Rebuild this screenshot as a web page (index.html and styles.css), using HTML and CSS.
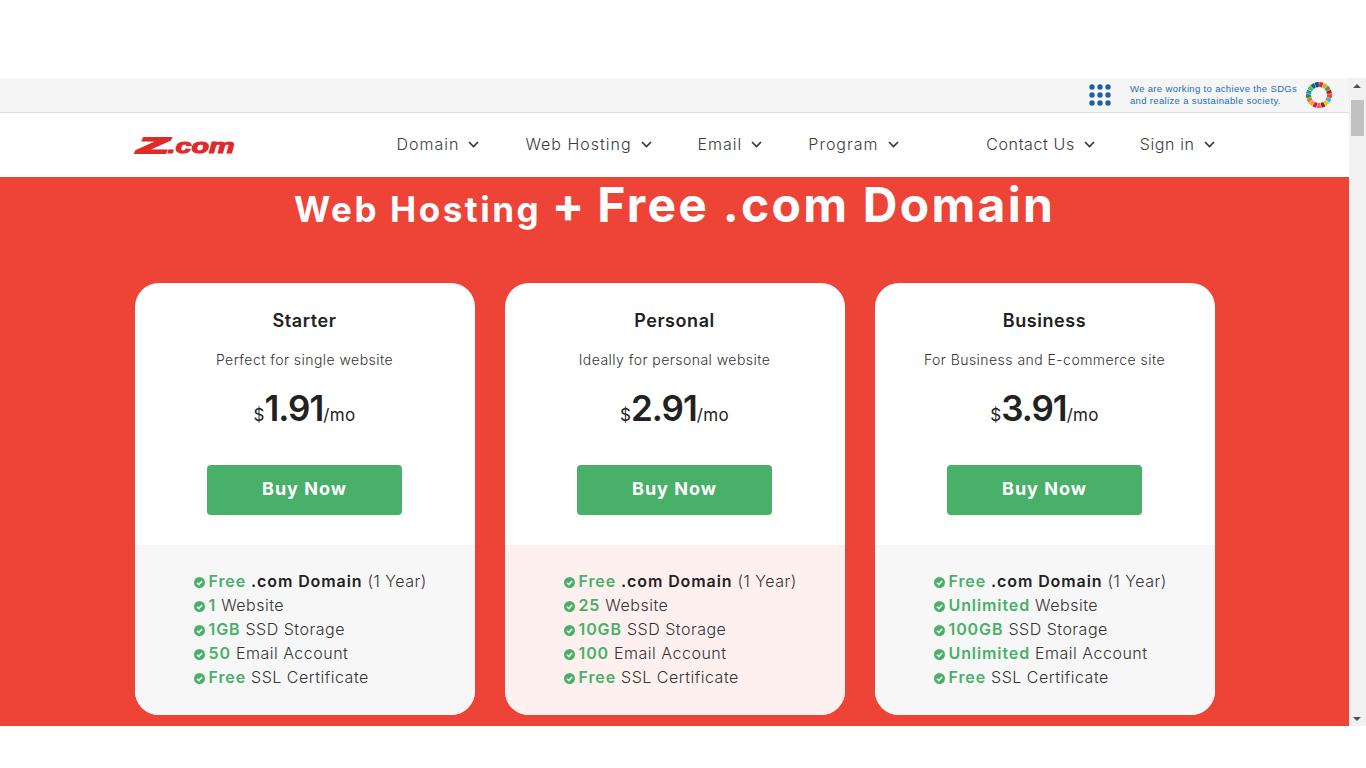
FILE: index.html
```html
<!DOCTYPE html>
<html>
<head>
    <title>Z.com Web Hosting</title>
    <link rel="stylesheet" href="styles.css">
</head>
<body>
    <div class="frame">
        <div class="page">
            <div class="sdg-bar">
                <svg class="sdg-dots" width="24" height="24" viewBox="0 0 24 24">
                    <circle cx="3" cy="4" r="2.7"/><circle cx="11" cy="4" r="2.7"/><circle cx="19" cy="4" r="2.7"/>
                    <circle cx="3" cy="12" r="2.7"/><circle cx="11" cy="12" r="2.7"/><circle cx="19" cy="12" r="2.7"/>
                    <circle cx="3" cy="20" r="2.7"/><circle cx="11" cy="20" r="2.7"/><circle cx="19" cy="20" r="2.7"/>
                </svg>
                <p class="sdg-text">We are working to achieve the SDGs<br>and realize a sustainable society.</p>
                <svg class="sdg-wheel" width="28" height="28" viewBox="0 0 28 28" id="wheel"></svg>
            </div>

            <header class="nav">
                <a class="logo" href="#">
                    <svg width="100" height="20" viewBox="0 0 100 20">
                        <text x="2.5" y="17" class="logo-z" textLength="31" lengthAdjust="spacingAndGlyphs">Z</text>
                        <text x="32.5" y="17" class="logo-com" textLength="67" lengthAdjust="spacingAndGlyphs">.com</text>
                    </svg>
                </a>
                <nav class="menu">
                    <a href="#">Domain <svg class="chev" width="11" height="7" viewBox="0 0 11 7"><path d="M1 1l4.5 4.5L10 1"/></svg></a>
                    <a href="#">Web Hosting <svg class="chev" width="11" height="7" viewBox="0 0 11 7"><path d="M1 1l4.5 4.5L10 1"/></svg></a>
                    <a href="#">Email <svg class="chev" width="11" height="7" viewBox="0 0 11 7"><path d="M1 1l4.5 4.5L10 1"/></svg></a>
                    <a href="#">Program <svg class="chev" width="11" height="7" viewBox="0 0 11 7"><path d="M1 1l4.5 4.5L10 1"/></svg></a>
                </nav>
                <nav class="menu menu-right">
                    <a href="#">Contact Us <svg class="chev" width="11" height="7" viewBox="0 0 11 7"><path d="M1 1l4.5 4.5L10 1"/></svg></a>
                    <a href="#">Sign in <svg class="chev" width="11" height="7" viewBox="0 0 11 7"><path d="M1 1l4.5 4.5L10 1"/></svg></a>
                </nav>
            </header>

            <section class="hero">
                <h1><span class="small">Web Hosting</span> <span class="plus">+</span> Free .com Domain</h1>
                <div class="plans" id="plans"></div>
            </section>
        </div>

        <div class="scrollbar">
            <span class="arrow up"></span>
            <span class="thumb"></span>
            <span class="arrow down"></span>
        </div>
    </div>

    <script>
        // SDG colour wheel
        const sdgColors = ['#e5243b','#dda63a','#4c9f38','#c5192d','#ff3a21','#26bde2','#fcc30b','#a21942','#fd6925','#dd1367','#fd9d24','#bf8b2e','#3f7e44','#0a97d9','#56c02b','#00689d','#19486a'];
        const wheel = document.getElementById('wheel');
        let wheelHtml = '';
        sdgColors.forEach((color, i) => {
            const a0 = (i / 17) * Math.PI * 2 - Math.PI / 2 + 0.02;
            const a1 = ((i + 1) / 17) * Math.PI * 2 - Math.PI / 2 - 0.02;
            const x0 = (14 + 10.5 * Math.cos(a0)).toFixed(2), y0 = (14 + 10.5 * Math.sin(a0)).toFixed(2);
            const x1 = (14 + 10.5 * Math.cos(a1)).toFixed(2), y1 = (14 + 10.5 * Math.sin(a1)).toFixed(2);
            wheelHtml += `<path d="M${x0} ${y0}A10.5 10.5 0 0 1 ${x1} ${y1}" stroke="${color}" stroke-width="5" fill="none"/>`;
        });
        wheel.innerHTML = wheelHtml;

        // Plan cards
        const plans = [
            { name: 'Starter', desc: 'Perfect for single website', price: '1.91', site: '1', disk: '1GB', mail: '50' },
            { name: 'Personal', desc: 'Ideally for personal website', price: '2.91', site: '25', disk: '10GB', mail: '100', tint: true },
            { name: 'Business', desc: 'For Business and E-commerce site', price: '3.91', site: 'Unlimited', disk: '100GB', mail: 'Unlimited' }
        ];
        const check = '<svg class="check" width="11" height="11" viewBox="0 0 11 11"><circle cx="5.5" cy="5.5" r="5.5"/><path d="M3 5.7l1.8 1.8L8.1 4"/></svg>';
        document.getElementById('plans').innerHTML = plans.map(p => `
            <div class="card">
                <div class="card-top">
                    <h3>${p.name}</h3>
                    <p class="desc">${p.desc}</p>
                    <p class="price"><span class="cur">$</span><span class="amount">${p.price}</span><span class="per">/mo</span></p>
                    <a class="buy" href="#">Buy Now</a>
                </div>
                <ul class="features${p.tint ? ' tint' : ''}">
                    <li>${check}<b>Free</b> <strong>.com Domain</strong> (1 Year)</li>
                    <li>${check}<b>${p.site}</b> Website</li>
                    <li>${check}<b>${p.disk}</b> SSD Storage</li>
                    <li>${check}<b>${p.mail}</b> Email Account</li>
                    <li>${check}<b>Free</b> SSL Certificate</li>
                </ul>
            </div>`).join('');
    </script>
</body>
</html>
```

FILE: styles.css
```css
html, body {
    margin: 0;
    height: 768px;
    overflow: hidden;
    background: #fff;
}
body {
    font-family: Inter, "Open Sans", sans-serif;
    padding-top: 78px;
    box-sizing: border-box;
    color: #333;
}
a {
    color: inherit;
    text-decoration: none;
}
.frame {
    display: flex;
    height: 648px;
    overflow: hidden;
}
.page {
    flex: 1;
    min-width: 0;
}
.sdg-bar {
    height: 34px;
    background: #f5f5f5;
    border-bottom: 1px solid #ddd;
    display: flex;
    align-items: center;
    justify-content: flex-end;
    padding-right: 16px;
}
.sdg-dots {
    fill: #1b5fa8;
    margin-right: 17px;
}
.sdg-text {
    margin: 0 7px 0 0;
    font-family: "Liberation Sans", sans-serif;
    font-size: 9.5px;
    line-height: 12px;
    letter-spacing: 0.34px;
    color: #1b6fb5;
    width: 168px;
    white-space: nowrap;
}
.sdg-wheel {
    margin-bottom: 1px;
}
.nav {
    height: 64px;
    width: 1080px;
    margin: 0 auto;
    padding-bottom: 2px;
    box-sizing: border-box;
    display: flex;
    align-items: center;
}
.logo {
    width: 100px;
    height: 20px;
    margin-right: 162px;
    margin-top: 4px;
}
.logo svg {
    overflow: visible;
}
.logo-z, .logo-com {
    font-family: "Liberation Sans", sans-serif;
    font-weight: bold;
    font-style: italic;
    fill: #df2a2a;
    stroke: #df2a2a;
}
.logo-z {
    font-size: 22px;
    stroke-width: 1.8;
}
.logo-com {
    font-size: 21px;
    stroke-width: 1.1;
}
.menu {
    display: flex;
    gap: 46px;
    font-size: 16px;
    font-weight: 300;
    letter-spacing: 1px;
    color: #3c3c3c;
}
.menu-right {
    margin-left: auto;
    gap: 45px;
    letter-spacing: 0.6px;
}
.menu a {
    display: flex;
    align-items: center;
    gap: 9px;
}
.chev {
    fill: none;
    stroke: #333;
    stroke-width: 1.6;
}
.hero {
    background: #ee4337;
    height: 549px;
}
.hero h1 {
    margin: 0;
    text-align: center;
    color: #fff;
    font-size: 48px;
    font-weight: 700;
    line-height: 56px;
    letter-spacing: 2.25px;
    white-space: nowrap;
}
.hero .small {
    font-size: 35px;
    letter-spacing: 2.55px;
}
.hero .plus {
    font-size: 48px;
    margin: 0 -3px;
}
.plans {
    width: 1080px;
    margin: 46px auto 0;
    display: grid;
    grid-template-columns: repeat(3, 340px);
    gap: 30px;
}
.card {
    background: #fff;
    border-radius: 24px;
    overflow: hidden;
    height: 432px;
}
.card-top {
    height: 262px;
    text-align: center;
    box-sizing: border-box;
    padding-top: 26px;
}
.card-top h3 {
    margin: 0;
    font-size: 18px;
    line-height: 24px;
    font-weight: 600;
    letter-spacing: 0.57px;
    color: #222;
}
.desc {
    margin: 17px 0 0;
    font-size: 14px;
    line-height: 20px;
    font-weight: 300;
    letter-spacing: 0.46px;
    color: #333;
}
.price {
    margin: 16px 0 0;
    height: 44px;
    line-height: 44px;
    color: #222;
}
.amount {
    font-size: 35px;
    font-weight: 600;
    letter-spacing: -1px;
}
.cur, .per {
    font-size: 17px;
}
.per {
    letter-spacing: 0.3px;
}
.buy {
    display: block;
    width: 195px;
    height: 50px;
    margin: 35px auto 0;
    line-height: 48px;
    border-radius: 4px;
    background: #48b068;
    color: #fff;
    font-size: 18px;
    font-weight: 700;
    letter-spacing: 1px;
}
.features {
    margin: 0;
    height: 170px;
    list-style: none;
    box-sizing: border-box;
    padding: 24px 0 0 59px;
    background: #f7f7f7;
    font-size: 16px;
    line-height: 24px;
    font-weight: 300;
    letter-spacing: 0.5px;
    color: #333;
}
.features.tint {
    background: #fff0f0;
}
.features b {
    color: #48b068;
    font-weight: 600;
    letter-spacing: 0.9px;
}
.features strong {
    color: #222;
    font-weight: 600;
    letter-spacing: 0.9px;
}
.check {
    margin-right: 4px;
    vertical-align: -1px;
}
.check circle {
    fill: #48b068;
}
.check path {
    fill: none;
    stroke: #fff;
    stroke-width: 1.6;
}
.scrollbar {
    width: 17px;
    background: #f1f1f1;
    position: relative;
}
.thumb {
    position: absolute;
    left: 2px;
    top: 22px;
    width: 13px;
    height: 36px;
    background: #c1c1c1;
}
.arrow {
    position: absolute;
    left: 4px;
    width: 0;
    height: 0;
    border-left: 4px solid transparent;
    border-right: 4px solid transparent;
}
.arrow.up {
    top: 6px;
    border-bottom: 4px solid #505050;
}
.arrow.down {
    bottom: 5px;
    border-top: 4px solid #505050;
}
```
